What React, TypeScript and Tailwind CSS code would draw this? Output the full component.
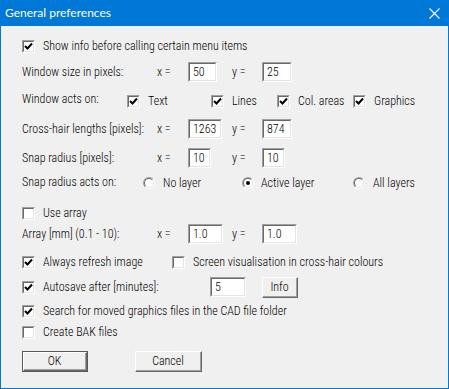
import type { ReactNode } from "react";

const font = { fontFamily: "'Roboto Condensed', 'Liberation Sans', sans-serif" };

function Check({ on }: { on?: boolean }) {
  return (
    <div className="w-[13px] h-[13px] shrink-0 border border-t-[#a0a0a0] border-l-[#a0a0a0] border-r-white border-b-white">
      <div className="w-full h-full bg-white border border-t-[#696969] border-l-[#696969] border-r-[#e3e3e3] border-b-[#e3e3e3] flex items-center justify-center">
        {on && (
          <svg width="9" height="9" viewBox="0 0 9 9">
            <path d="M1 4 L3.5 6.5 L8 1.5" stroke="#000" strokeWidth="2" fill="none" />
          </svg>
        )}
      </div>
    </div>
  );
}

function Radio({ on }: { on?: boolean }) {
  return (
    <div className="w-[12px] h-[12px] shrink-0 rounded-full border border-t-[#a0a0a0] border-l-[#a0a0a0] border-r-white border-b-white">
      <div className="w-full h-full rounded-full bg-white border border-t-[#696969] border-l-[#696969] border-r-[#e3e3e3] border-b-[#e3e3e3] flex items-center justify-center">
        {on && <div className="w-[4px] h-[4px] rounded-full bg-black" />}
      </div>
    </div>
  );
}

function Field({ value, w }: { value: string; w: string }) {
  return (
    <div className={`${w} h-[20px] shrink-0 border border-t-[#a0a0a0] border-l-[#a0a0a0] border-r-white border-b-white`}>
      <div className="w-full h-full bg-white border border-t-[#696969] border-l-[#696969] border-r-[#e3e3e3] border-b-[#e3e3e3] pl-[3px] leading-[16px]">
        {value}
      </div>
    </div>
  );
}

function Btn({ children, w, def }: { children: ReactNode; w: string; def?: boolean }) {
  return (
    <div className={`${w} h-[21px] shrink-0 ${def ? "border border-[#5a5a5a]" : ""}`}>
      <div className="w-full h-full border border-t-white border-l-white border-r-[#696969] border-b-[#696969]">
        <div className="w-full h-full border-r border-b border-[#a0a0a0] bg-[#f0f0f0] flex items-center justify-center">
          {children}
        </div>
      </div>
    </div>
  );
}

function CheckRow({ on, label, className = "" }: { on?: boolean; label: string; className?: string }) {
  return (
    <div className={`flex items-center ${className}`}>
      <Check on={on} />
      <span className="ml-[8px] whitespace-nowrap">{label}</span>
    </div>
  );
}

function XYRow({ label, x, y, wx, wy, className = "" }: { label: string; x: string; y: string; wx: string; wy: string; className?: string }) {
  return (
    <div className={`flex items-center h-[20px] ${className}`}>
      <span className="w-[135px]">{label}</span>
      <span className="w-[31px]">x =</span>
      <div className="w-[44px]">
        <Field value={x} w={wx} />
      </div>
      <span className="w-[30px]">y =</span>
      <Field value={y} w={wy} />
    </div>
  );
}

export default function App() {
  return (
    <div className="w-[449px] h-[389px] flex flex-col bg-[#0078d7] text-[12px] font-light text-black" style={font}>
      <div className="h-[26px] shrink-0 flex items-center justify-between pl-[5px] pr-[9px] text-white text-[12px] font-normal" style={{ fontFamily: "Lato, 'Noto Sans', sans-serif" }}>
        <span>General preferences</span>
        <svg width="11" height="11" viewBox="0 0 11 11">
          <path d="M0.5 0.5 L10.5 10.5 M10.5 0.5 L0.5 10.5" stroke="#fff" strokeWidth="1.1" />
        </svg>
      </div>
      <div className="flex-1 mx-[1px] mb-[1px] bg-[#f0f0f0] pl-[21px] flex flex-col">
        <CheckRow on label="Show info before calling certain menu items" className="mt-[10px] h-[20px]" />

        <XYRow label="Window size in pixels:" x="50" y="25" wx="w-[29px]" wy="w-[30px]" className="mt-[5px] h-[21px]" />

        <div className="mt-[10px] h-[18px] flex items-center">
          <span className="w-[105px] -mt-[4px]">Window acts on:</span>
          <CheckRow on label="Text" className="w-[84px]" />
          <CheckRow on label="Lines" className="w-[66px]" />
          <CheckRow on label="Col. areas" className="w-[76px]" />
          <CheckRow on label="Graphics" />
        </div>

        <XYRow label="Cross-hair lengths [pixels]:" x="1263" y="874" wx="w-[34px]" wy="w-[30px]" className="mt-[9px]" />
        <XYRow label="Snap radius [pixels]:" x="10" y="10" wx="w-[23px]" wy="w-[23px]" className="mt-[9px]" />

        <div className="mt-[6px] h-[18px] flex items-center">
          <span className="w-[121px] -mt-[2px]">Snap radius acts on:</span>
          <div className="w-[99px] flex items-center">
            <Radio />
            <span className="ml-[8px]">No layer</span>
          </div>
          <div className="w-[111px] flex items-center">
            <Radio on />
            <span className="ml-[7px]">Active layer</span>
          </div>
          <div className="flex items-center">
            <Radio />
            <span className="ml-[8px]">All layers</span>
          </div>
        </div>

        <CheckRow label="Use array" className="mt-[11px] h-[20px]" />
        <XYRow label="Array [mm] (0.1 - 10):" x="1.0" y="1.0" wx="w-[35px]" wy="w-[35px]" className="mt-[1px]" />

        <div className="mt-[8px] h-[20px] flex items-center">
          <CheckRow on label="Always refresh image" className="w-[150px]" />
          <CheckRow label="Screen visualisation in cross-hair colours" />
        </div>

        <div className="mt-[5px] h-[20px] flex items-center">
          <CheckRow on label="Autosave after [minutes]:" className="w-[188px]" />
          <Field value="5" w="w-[36px]" />
          <div className="w-[16px]" />
          <Btn w="w-[36px]">Info</Btn>
        </div>

        <CheckRow on label="Search for moved graphics files in the CAD file folder" className="mt-[4px] h-[20px]" />
        <CheckRow label="Create BAK files" className="mt-[1px] h-[20px]" />

        <div className="mt-[9px] flex items-center">
          <Btn w="w-[66px]" def>OK</Btn>
          <div className="w-[47px]" />
          <Btn w="w-[67px]">Cancel</Btn>
        </div>
      </div>
    </div>
  );
}
